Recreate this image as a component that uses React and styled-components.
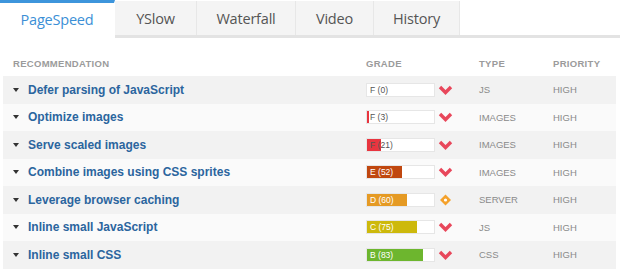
import React from 'react'
import styled, { createGlobalStyle } from 'styled-components'

const GlobalStyle = createGlobalStyle`
    body {
        margin: 0;
        background: #fff;
        font-family: 'Liberation Sans', Arial, sans-serif;
    }
`

const TabBar = styled.nav`
    display: flex;
    align-items: flex-end;
    height: 35px;
    border-bottom: 3px solid #e3e3e3;
`

const Tab = styled.div`
    box-sizing: border-box;
    width: ${p => p.$w}px;
    height: ${p => (p.$active ? 38 : 34)}px;
    margin-bottom: ${p => (p.$active ? -3 : 0)}px;
    display: flex;
    align-items: center;
    justify-content: center;
    padding-bottom: ${p => (p.$active ? 3 : 0)}px;
    background: ${p => (p.$active ? '#fff' : '#f4f4f4')};
    border-top: ${p => (p.$active ? '3px solid #3d95dc' : 'none')};
    border-right: 1px solid ${p => (p.$active ? '#fff' : '#e7e7e7')};
    font-family: 'Open Sans', 'Noto Sans', sans-serif;
    font-size: 14.5px;
    letter-spacing: -0.2px;
    color: ${p => (p.$active ? '#3b8fd6' : '#555')};
`

const Table = styled.section`
    margin: 12px 4px 0 3px;
`

const Cols = styled.div`
    display: grid;
    grid-template-columns: 363px 113px 74px 1fr;
    align-items: center;
`

const HeadRow = styled(Cols)`
    height: 26px;
    font-size: 9.5px;
    font-weight: 700;
    letter-spacing: 0.3px;
    color: #9b9b9b;
    text-transform: uppercase;
    & > span:first-child {
        padding-left: 10px;
    }
`

const Row = styled(Cols)`
    height: 27.5px;
    background: ${p => (p.$odd ? '#fafafa' : '#f2f2f2')};
`

const Title = styled.div`
    display: flex;
    align-items: center;
    padding-left: 10px;
    font-size: 12px;
    font-weight: 700;
    color: #2b659e;
    &::before {
        content: '';
        width: 0;
        height: 0;
        margin-right: 9px;
        border-left: 3px solid transparent;
        border-right: 3px solid transparent;
        border-top: 4px solid #333;
    }
`

const Grade = styled.div`
    display: flex;
    align-items: center;
`

const Bar = styled.div`
    box-sizing: border-box;
    width: 69px;
    height: 14px;
    border: 1px solid #e6e6e6;
    background: linear-gradient(to right, ${p => p.$color} ${p => p.$pct}%, #fff ${p => p.$pct}%);
    padding-left: 3px;
    font-size: 8.5px;
    line-height: 12px;
    color: ${p => (p.$light ? '#fff' : '#555')};
`

const Cell = styled.span`
    font-size: 9.5px;
    color: #8a8a8a;
    text-transform: uppercase;
`

const Chevron = () => (
    <svg width="15" height="10" viewBox="0 0 15 10" style={{ marginLeft: 3 }}>
        <polyline points="2,2 7.5,7.5 13,2" fill="none" stroke="#e8475b" strokeWidth="3.4" strokeLinejoin="miter" />
    </svg>
)

const Diamond = () => (
    <svg width="15" height="12" viewBox="0 0 15 12" style={{ marginLeft: 3 }}>
        <polygon points="7.5,0.5 13,6 7.5,11.5 2,6" fill="#f4a12b" />
        <circle cx="7.5" cy="6" r="1.6" fill="#fff" />
    </svg>
)

const tabs = [
    ['PageSpeed', 115],
    ['YSlow', 82],
    ['Waterfall', 99],
    ['Video', 78],
    ['History', 86],
]

const rules = [
    { name: 'Defer parsing of JavaScript', grade: 'F', score: 0, color: '#e8353f', type: 'JS' },
    { name: 'Optimize images', grade: 'F', score: 3, color: '#e8353f', type: 'Images' },
    { name: 'Serve scaled images', grade: 'F', score: 21, color: '#e8353f', type: 'Images' },
    { name: 'Combine images using CSS sprites', grade: 'E', score: 52, color: '#c0470f', type: 'Images' },
    { name: 'Leverage browser caching', grade: 'D', score: 60, color: '#e59a24', type: 'Server', warn: true },
    { name: 'Inline small JavaScript', grade: 'C', score: 75, color: '#cdb90c', type: 'JS' },
    { name: 'Inline small CSS', grade: 'B', score: 83, color: '#6db62e', type: 'CSS' },
]

function App() {
    return (
        <>
            <GlobalStyle />
            <TabBar>
                {tabs.map(([label, w], i) => (
                    <Tab key={label} $w={w} $active={i === 0}>{label}</Tab>
                ))}
            </TabBar>
            <Table>
                <HeadRow>
                    <span>Recommendation</span>
                    <span>Grade</span>
                    <span>Type</span>
                    <span>Priority</span>
                </HeadRow>
                {rules.map((r, i) => (
                    <Row key={r.name} $odd={i % 2 === 1}>
                        <Title>{r.name}</Title>
                        <Grade>
                            <Bar $color={r.color} $pct={r.score} $light={r.score >= 50}>
                                {r.grade} ({r.score})
                            </Bar>
                            {r.warn ? <Diamond /> : <Chevron />}
                        </Grade>
                        <Cell>{r.type}</Cell>
                        <Cell>High</Cell>
                    </Row>
                ))}
            </Table>
        </>
    )
}

export default App
